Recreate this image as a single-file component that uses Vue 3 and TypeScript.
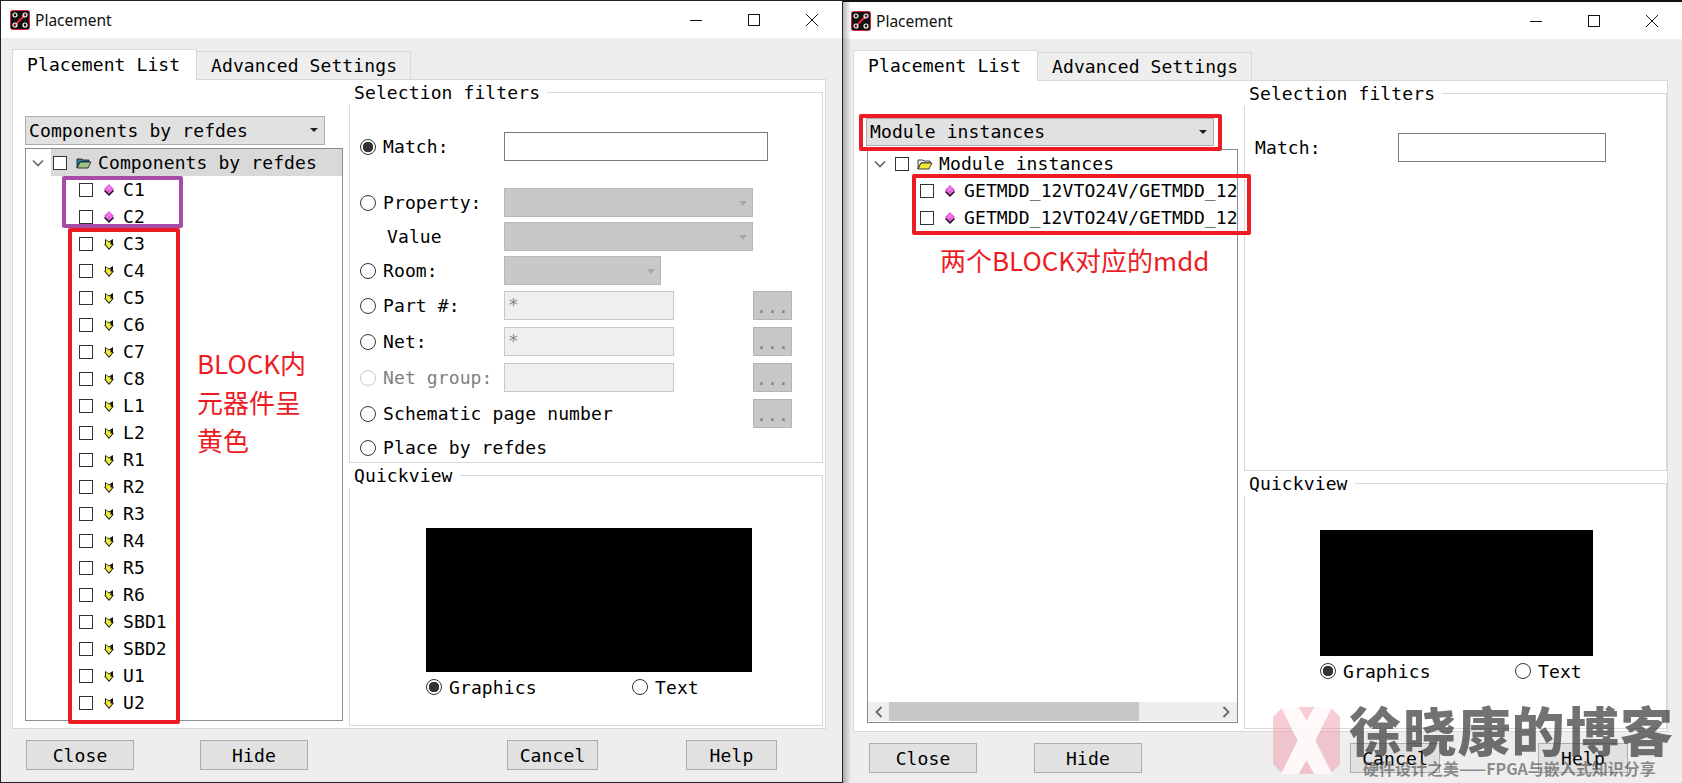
<script setup lang="ts">
const refdes: string[] = [
  'C3', 'C4', 'C5', 'C6', 'C7', 'C8', 'L1', 'L2', 'R1', 'R2', 'R3', 'R4', 'R5', 'R6', 'SBD1', 'SBD2', 'U1', 'U2',
]
const modules: string[] = ['GETMDD_12VTO24V/GETMDD_12', 'GETMDD_12VTO24V/GETMDD_12']
</script>

<template>
  <div class="desktop">
    <!-- left window -->
    <section class="window w1">
      <header class="title">
        <svg class="logo" viewBox="0 0 20 20"><rect x="0.5" y="0.5" width="19" height="19" rx="2" fill="#111" stroke="#d8263c"/><path d="M5 15 15 5" stroke="#e8283c" stroke-width="2"/><circle cx="5" cy="5" r="2" fill="none" stroke="#fff" stroke-width="1.2"/><circle cx="15" cy="5" r="2" fill="none" stroke="#fff" stroke-width="1.2"/><circle cx="5" cy="15" r="2" fill="none" stroke="#fff" stroke-width="1.2"/><circle cx="15" cy="15" r="2" fill="none" stroke="#fff" stroke-width="1.2"/></svg>
        <span class="title-text">Placement</span>
        <span class="caption">
          <svg viewBox="0 0 12 12"><path d="M0 6.500H12" stroke="#111"/></svg>
          <svg viewBox="0 0 12 12"><rect x="0.500" y="0.500" width="11" height="11" fill="none" stroke="#111"/></svg>
          <svg viewBox="0 0 12 12"><path d="M0 0 12 12M12 0 0 12" stroke="#111"/></svg>
        </span>
      </header>
      <nav class="tabs">
        <span class="tab active">Placement List</span>
        <span class="tab">Advanced Settings</span>
      </nav>
      <div class="panel">
        <div class="left">
          <div class="combo">Components by refdes<i class="arrow"></i></div>
          <div class="tree">
            <div class="tree-body">
              <div class="node root selected">
                <svg class="chev" viewBox="0 0 12 8"><path d="M1 1.500 6 6.500 11 1.500" fill="none" stroke="#666" stroke-width="1.600"/></svg>
                <i class="check"></i>
                <svg class="folder" viewBox="0 0 16 12"><path d="M1 2h5l1 1h6v2H4L1 11z" fill="#2a7fa8" stroke="#111" stroke-width=".8"/><path d="M4 5h11l-3 6H1z" fill="#9fc48a" stroke="#111" stroke-width=".8"/></svg>
                <span>Components by refdes</span>
              </div>
              <div class="node child" v-for="c in ['C1', 'C2']" :key="c">
                <i class="check"></i>
                <svg class="item" viewBox="0 0 10 12"><path d="M5 2 10 7 5 12 0 7z" fill="#111"/><path d="M5 0 10 5 5 10 0 5z" fill="#e65ae0"/><path d="M3 2 8 7M7 2 2 7" stroke="#f5b8f2" stroke-width=".6"/></svg>
                <span>{{ c }}</span>
              </div>
              <div class="node child" v-for="c in refdes" :key="c">
                <i class="check"></i>
                <svg class="item" viewBox="0 0 10 12"><path d="M1 1 5 3.500 9 1V6H10L5 12 0 6H1z" fill="#111"/><path d="M2 2 5 4.500 6.500 3.500V6.500H8.500L5 10.500 1.200 6H2z" fill="#f2ec3c"/></svg>
                <span>{{ c }}</span>
              </div>
            </div>
          </div>
        </div>
        <div class="right">
          <div class="group sel1">
            <span class="legend">Selection filters</span>
            <div class="row first">
              <i class="radio on"></i><span class="lbl">Match:</span>
              <div class="input match"></div>
            </div>
            <div class="row g27">
              <i class="radio"></i><span class="lbl">Property:</span>
              <div class="dcombo wide"><i class="darrow"></i></div>
            </div>
            <div class="row g5">
              <span class="lbl value">Value</span>
              <div class="dcombo wide"><i class="darrow"></i></div>
            </div>
            <div class="row g5">
              <i class="radio"></i><span class="lbl">Room:</span>
              <div class="dcombo"><i class="darrow"></i></div>
            </div>
            <div class="row g6">
              <i class="radio"></i><span class="lbl">Part #:</span>
              <div class="slot"><div class="dinput">*</div></div>
              <span class="dots">...</span>
            </div>
            <div class="row g7">
              <i class="radio"></i><span class="lbl">Net:</span>
              <div class="slot"><div class="dinput">*</div></div>
              <span class="dots">...</span>
            </div>
            <div class="row g7 muted">
              <i class="radio off"></i><span class="lbl">Net group:</span>
              <div class="slot"><div class="dinput"></div></div>
              <span class="dots">...</span>
            </div>
            <div class="row g7">
              <i class="radio"></i><span class="lbl long">Schematic page number</span>
              <span class="dots">...</span>
            </div>
            <div class="row g5">
              <i class="radio"></i><span class="lbl">Place by refdes</span>
            </div>
          </div>
          <div class="group qv1">
            <span class="legend">Quickview</span>
            <div class="view"></div>
            <div class="qv-row">
              <span class="qv-opt"><i class="radio on"></i><span>Graphics</span></span>
              <span class="qv-opt"><i class="radio"></i><span>Text</span></span>
            </div>
          </div>
        </div>
      </div>
      <footer class="foot">
        <span class="btn wide-btn">Close</span>
        <span class="btn wide-btn hide1">Hide</span>
        <span class="btn cancel1">Cancel</span>
        <span class="btn help1">Help</span>
      </footer>
    </section>

    <!-- right window -->
    <section class="window w2">
      <header class="title">
        <svg class="logo" viewBox="0 0 20 20"><rect x="0.5" y="0.5" width="19" height="19" rx="2" fill="#111" stroke="#d8263c"/><path d="M5 15 15 5" stroke="#e8283c" stroke-width="2"/><circle cx="5" cy="5" r="2" fill="none" stroke="#fff" stroke-width="1.2"/><circle cx="15" cy="5" r="2" fill="none" stroke="#fff" stroke-width="1.2"/><circle cx="5" cy="15" r="2" fill="none" stroke="#fff" stroke-width="1.2"/><circle cx="15" cy="15" r="2" fill="none" stroke="#fff" stroke-width="1.2"/></svg>
        <span class="title-text">Placement</span>
        <span class="caption">
          <svg viewBox="0 0 12 12"><path d="M0 6.500H12" stroke="#111"/></svg>
          <svg viewBox="0 0 12 12"><rect x="0.500" y="0.500" width="11" height="11" fill="none" stroke="#111"/></svg>
          <svg viewBox="0 0 12 12"><path d="M0 0 12 12M12 0 0 12" stroke="#111"/></svg>
        </span>
      </header>
      <nav class="tabs">
        <span class="tab active">Placement List</span>
        <span class="tab">Advanced Settings</span>
      </nav>
      <div class="panel">
        <div class="left">
          <div class="combo">Module instances<i class="arrow"></i></div>
          <div class="tree">
            <div class="tree-body">
              <div class="node root">
                <svg class="chev" viewBox="0 0 12 8"><path d="M1 1.500 6 6.500 11 1.500" fill="none" stroke="#666" stroke-width="1.600"/></svg>
                <i class="check"></i>
                <svg class="folder" viewBox="0 0 16 12"><path d="M1 2h5l1 1h6v2H4L1 11z" fill="#eee" stroke="#111" stroke-width=".8"/><path d="M4 5h11l-3 6H1z" fill="#f4e83c" stroke="#111" stroke-width=".8"/></svg>
                <span>Module instances</span>
              </div>
              <div class="node child" v-for="(m, i) in modules" :key="i">
                <i class="check"></i>
                <svg class="item" viewBox="0 0 10 12"><path d="M5 2 10 7 5 12 0 7z" fill="#111"/><path d="M5 0 10 5 5 10 0 5z" fill="#e65ae0"/><path d="M3 2 8 7M7 2 2 7" stroke="#f5b8f2" stroke-width=".6"/></svg>
                <span>{{ m }}</span>
              </div>
            </div>
            <div class="hscroll">
              <svg viewBox="0 0 8 12"><path d="M6.500 1 1.500 6 6.500 11" fill="none" stroke="#666" stroke-width="1.800"/></svg>
              <i class="thumb"></i>
              <svg viewBox="0 0 8 12"><path d="M1.500 1 6.500 6 1.500 11" fill="none" stroke="#666" stroke-width="1.800"/></svg>
            </div>
          </div>
        </div>
        <div class="right">
          <div class="group sel2">
            <span class="legend">Selection filters</span>
            <div class="row first">
              <span class="lbl match-lbl">Match:</span>
              <div class="input match2"></div>
            </div>
          </div>
          <div class="group qv2">
            <span class="legend">Quickview</span>
            <div class="view"></div>
            <div class="qv-row">
              <span class="qv-opt"><i class="radio on"></i><span>Graphics</span></span>
              <span class="qv-opt"><i class="radio"></i><span>Text</span></span>
            </div>
          </div>
        </div>
      </div>
      <footer class="foot">
        <span class="btn wide-btn">Close</span>
        <span class="btn wide-btn hide2">Hide</span>
        <span class="btn cancel2">Cancel</span>
        <span class="btn help2">Help</span>
      </footer>
    </section>

    <!-- annotations drawn over the screenshots -->
    <i class="mark purple"></i>
    <i class="mark red-list"></i>
    <i class="mark red-combo"></i>
    <i class="mark red-mods"></i>
    <p class="note note-left">BLOCK内<br />元器件呈<br />黄色</p>
    <p class="note note-right">两个BLOCK对应的mdd</p>

    <!-- watermark -->
    <svg class="wm-logo" viewBox="0 0 68 68">
      <path d="M10 0H58L68 10V58L58 68H10L0 58V10z" fill="#f3a3b0" opacity=".55"/>
      <path d="M8 0H26L34 14 42 0H60L43 34 60 68H42L34 54 26 68H8L25 34z" fill="#fff" opacity=".88"/>
    </svg>
    <div class="wm-main">徐晓康的博客</div>
    <div class="wm-sub">硬件设计之美——FPGA与嵌入式知识分享</div>
  </div>
</template>

<style scoped>
.desktop {
  position: relative;
  display: flex;
  width: 1682px;
  height: 783px;
  overflow: hidden;
  font-family: "DejaVu Sans Mono", "Liberation Mono", monospace;
  font-size: 18px;
  letter-spacing: 0.11px;
  color: #000;
}
i {
  display: block;
  flex: none;
  font-style: normal;
}
.window {
  position: relative;
  display: flex;
  flex-direction: column;
  flex: none;
  box-sizing: border-box;
  height: 783px;
  background: #eeeeee;
}
.w1 {
  width: 843px;
  border: 1px solid #222;
}
.w2 {
  width: 839px;
  border-top: 2px solid #111;
}
.w2::before {
  content: "";
  position: absolute;
  left: 0;
  top: 0;
  bottom: 0;
  width: 8px;
  background: linear-gradient(90deg, rgba(0, 0, 0, 0.28), rgba(0, 0, 0, 0));
}

/* title bar */
.title {
  display: flex;
  align-items: center;
  flex: none;
  height: 37px;
  padding-left: 9px;
  background: #fff;
}
.w2 .title {
  padding-left: 8px;
}
.logo {
  width: 20px;
  height: 20px;
  flex: none;
}
.title-text {
  margin-left: 5px;
  font-family: "Noto Sans", sans-serif;
  font-size: 15.500px;
  letter-spacing: 0;
  color: #111;
}
.caption {
  display: flex;
  align-items: center;
  gap: 46px;
  margin-left: auto;
  padding-right: 24px;
}
.caption svg {
  width: 12px;
  height: 12px;
}

/* tabs */
.tabs {
  display: flex;
  align-items: flex-end;
  flex: none;
  height: 31px;
  margin: 11px 0 -1px 11px;
}
.w2 .tabs {
  margin-left: 10px;
}
.tab {
  position: relative;
  box-sizing: border-box;
  width: 214px;
  height: 29px;
  padding-left: 14px;
  line-height: 27px;
  background: #eeeeee;
  border: 1px solid #d8d8d8;
  border-left: 0;
}
.tab.active {
  z-index: 1;
  width: 185px;
  height: 31px;
  padding-left: 14px;
  line-height: 30px;
  background: #fff;
  border-left: 1px solid #d8d8d8;
  border-bottom: 0;
}

/* panel */
.panel {
  display: flex;
  flex: none;
  box-sizing: border-box;
  background: #fff;
  border: 1px solid #d8d8d8;
  padding-left: 12px;
}
.w1 .panel {
  width: 814px;
  height: 650px;
  margin-left: 11px;
}
.w2 .panel {
  width: 815px;
  height: 652px;
  margin-left: 10px;
}
.left {
  flex: none;
  padding-top: 36px;
  margin-right: 6px;
}
.w1 .left {
  width: 318px;
}
.w2 .left {
  width: 372px;
  padding-top: 37px;
}
.combo {
  position: relative;
  box-sizing: border-box;
  height: 29px;
  margin-bottom: 3px;
  padding-left: 3px;
  line-height: 28px;
  background: #e1e1e1;
  border: 1px solid #adadad;
}
.w1 .combo {
  width: 300px;
}
.w2 .combo {
  width: 348px;
  height: 28px;
  line-height: 26px;
}
.arrow {
  position: absolute;
  right: 6px;
  top: 11px;
  width: 0;
  height: 0;
  border: 4px solid transparent;
  border-top: 4px solid #222;
  border-bottom: 0;
}
.tree {
  display: flex;
  flex-direction: column;
  box-sizing: border-box;
  border: 1px solid #8b8b93;
  background: #fff;
}
.w1 .tree {
  height: 573px;
}
.w2 .tree {
  width: 371px;
  height: 574px;
  margin-left: 1px;
}
.tree-body {
  flex: 1;
  overflow: hidden;
}
.node {
  position: relative;
  display: flex;
  align-items: center;
  height: 27px;
  white-space: nowrap;
}
.root {
  width: 292px;
  margin-left: 25px;
  padding-left: 2px;
}
.root.selected {
  background: #d9d9d9;
}
.chev {
  position: absolute;
  left: -19px;
  top: 10px;
  width: 12px;
  height: 8px;
}
.check {
  box-sizing: border-box;
  width: 14px;
  height: 14px;
  background: #fff;
  border: 1px solid #333;
}
.folder {
  width: 16px;
  height: 12px;
  margin-left: 9px;
  margin-right: 6px;
  flex: none;
}
.w2 .folder {
  margin-left: 8px;
}
.child {
  padding-left: 53px;
}
.w2 .child {
  padding-left: 52px;
}
.item {
  width: 10px;
  height: 12px;
  margin-left: 11px;
  margin-right: 9px;
  flex: none;
}
.hscroll {
  display: flex;
  align-items: center;
  flex: none;
  height: 19px;
  margin-bottom: 1px;
  padding: 0 7px;
  background: #eeeeee;
}
.hscroll svg {
  width: 8px;
  height: 12px;
  flex: none;
}
.hscroll svg:last-child {
  margin-left: auto;
}
.thumb {
  width: 250px;
  height: 19px;
  margin-left: 6px;
  background: #c8c8c8;
}

/* groups */
.right {
  flex: none;
  padding-top: 12px;
}
.group {
  position: relative;
  box-sizing: border-box;
  border: 1px solid #d8d8d8;
  background: #fff;
}
.sel1 {
  width: 474px;
  height: 371px;
  padding: 39px 0 0 10px;
}
.qv1 {
  width: 474px;
  height: 251px;
  margin-top: 12px;
  padding: 52px 0 0 76px;
}
.sel2 {
  width: 423px;
  height: 378px;
  padding: 39px 0 0 10px;
}
.qv2 {
  width: 423px;
  height: 246px;
  margin-top: 12px;
  padding: 46px 0 0 75px;
}
.legend {
  position: absolute;
  left: -1px;
  top: -12px;
  height: 24px;
  padding: 0 7px 0 5px;
  line-height: 23px;
  background: #fff;
  white-space: nowrap;
}
.row {
  display: flex;
  align-items: center;
  height: 29px;
}
.g27 {
  margin-top: 27px;
}
.g5 {
  margin-top: 5px;
}
.g6 {
  margin-top: 6px;
}
.g7 {
  margin-top: 7px;
}
.radio {
  box-sizing: border-box;
  width: 16px;
  height: 16px;
  margin-right: 7px;
  background: #fff;
  border: 1.300px solid #333;
  border-radius: 50%;
}
.radio.on {
  background: radial-gradient(circle, #333 0 5px, #fff 5.500px);
}
.radio.off {
  border-color: #ccc;
}
.lbl {
  width: 121px;
  flex: none;
  white-space: nowrap;
}
.lbl.value {
  margin-left: 27px;
  width: 117px;
}
.lbl.long {
  width: 370px;
}
.match-lbl {
  width: 143px;
}
.muted .lbl {
  color: #808080;
}
.input {
  box-sizing: border-box;
  height: 29px;
  background: #fff;
  border: 1px solid #7a7a7a;
}
.match {
  width: 264px;
}
.match2 {
  width: 208px;
}
.dcombo {
  position: relative;
  box-sizing: border-box;
  width: 157px;
  height: 29px;
  background: #c8c8c8;
  border: 1px solid #b8b8b8;
}
.dcombo.wide {
  width: 249px;
}
.darrow {
  position: absolute;
  right: 5px;
  top: 12px;
  width: 0;
  height: 0;
  border: 4px solid transparent;
  border-top: 5px solid #a8a8a8;
  border-bottom: 0;
}
.slot {
  width: 249px;
  flex: none;
}
.dinput {
  box-sizing: border-box;
  width: 170px;
  height: 29px;
  padding-left: 3px;
  line-height: 25px;
  color: #8a8a8a;
  background: #efefef;
  border: 1.500px solid #c8c8c8;
}
.dots {
  box-sizing: border-box;
  width: 39px;
  height: 29px;
  text-align: center;
  line-height: 30px;
  letter-spacing: 0.11px;
  color: #7f7f7f;
  background: #c8c8c8;
  border: 1px solid #b4b4b4;
}

/* quickview */
.view {
  background: #000;
}
.qv1 .view {
  width: 326px;
  height: 144px;
}
.qv2 .view {
  width: 273px;
  height: 126px;
}
.qv-row {
  display: flex;
  align-items: center;
  height: 30px;
}
.qv-opt {
  display: flex;
  align-items: center;
  flex: none;
}
.qv1 .qv-opt {
  width: 206px;
}
.qv2 .qv-opt {
  width: 195px;
}

/* footer */
.foot {
  display: flex;
  flex: none;
  margin-top: 11px;
  padding-left: 25px;
}
.w2 .foot {
  padding-left: 26px;
}
.btn {
  box-sizing: border-box;
  width: 91px;
  height: 30px;
  text-align: center;
  line-height: 30px;
  background: #e1e1e1;
  border: 1px solid #adadad;
}
.wide-btn {
  width: 108px;
}
.hide1 {
  margin-left: 66px;
}
.cancel1 {
  margin-left: 199px;
}
.help1 {
  margin-left: 88px;
}
.hide2 {
  margin-left: 57px;
}
.cancel2 {
  margin-left: 208px;
  width: 90px;
}
.help2 {
  margin-left: 98px;
  width: 90px;
}

/* annotations */
.mark {
  position: absolute;
  box-sizing: border-box;
  border-radius: 2px;
}
.purple {
  left: 62px;
  top: 176px;
  width: 121px;
  height: 52px;
  border: 4px solid #a64ca6;
}
.red-list {
  left: 68px;
  top: 228px;
  width: 112px;
  height: 496px;
  border: 4px solid #ed1c24;
}
.red-combo {
  left: 859px;
  top: 114px;
  width: 363px;
  height: 37px;
  border: 4px solid #ed1c24;
}
.red-mods {
  left: 912px;
  top: 174px;
  width: 339px;
  height: 61px;
  border: 4px solid #ed1c24;
}
.note {
  position: absolute;
  margin: 0;
  font-family: "Noto Sans CJK SC", sans-serif;
  font-size: 26px;
  letter-spacing: 0;
  color: #ed1c24;
  white-space: nowrap;
}
.note-left {
  left: 197px;
  top: 344px;
  line-height: 38.500px;
}
.note-right {
  left: 940px;
  top: 241px;
  line-height: 38px;
}

/* watermark */
.wm-logo {
  position: absolute;
  left: 1273px;
  top: 707px;
  width: 67px;
  height: 67px;
}
.wm-main {
  position: absolute;
  left: 1349px;
  top: 692px;
  font-family: "Noto Sans CJK SC", sans-serif;
  font-size: 53px;
  font-weight: 900;
  line-height: 74px;
  letter-spacing: 1.200px;
  color: rgba(60, 60, 60, 0.72);
  white-space: nowrap;
}
.wm-sub {
  position: absolute;
  left: 1363px;
  top: 756px;
  font-family: "Noto Sans CJK SC", sans-serif;
  font-size: 16px;
  font-weight: 700;
  line-height: 24px;
  letter-spacing: 0;
  color: rgba(70, 70, 70, 0.6);
  white-space: nowrap;
}
</style>
